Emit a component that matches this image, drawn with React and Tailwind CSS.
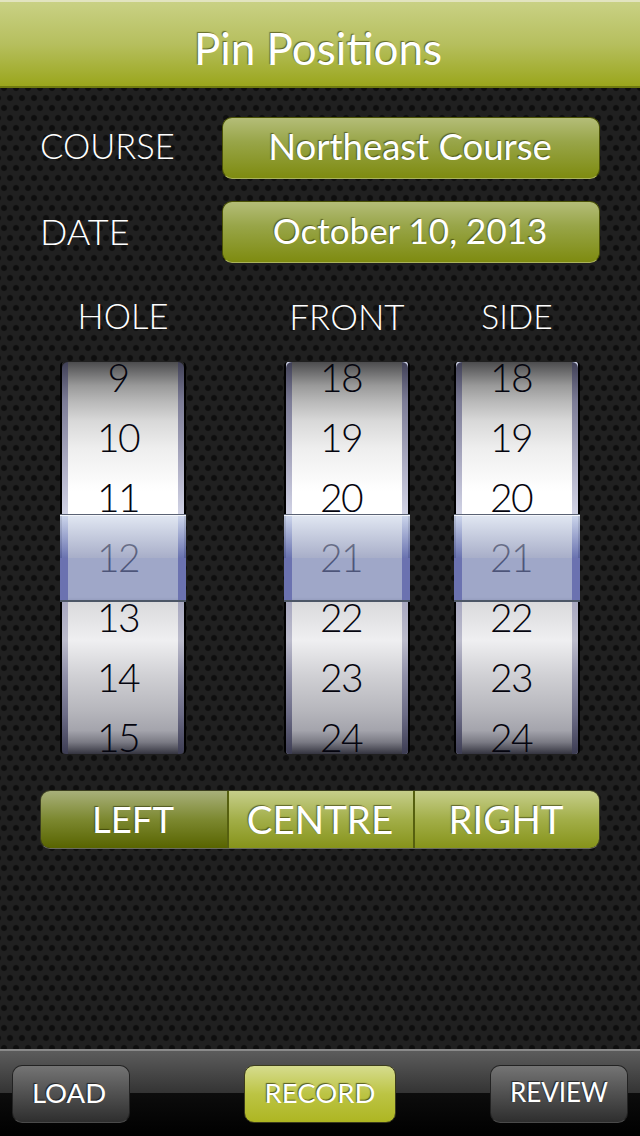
const shadow = "[text-shadow:-1px_-1px_1px_rgba(40,45,0,0.6)]";
const stripGradient = "bg-[linear-gradient(to_bottom,#3f3f55_0%,#7c7c96_10%,#b0b0c6_27%,#d4d6e8_40%,#d4d6e8_60%,#a8a8c0_61%,#bcbccc_71%,#9090a8_80%,#6c6c86_90%,#3c3c52_100%)]";

function Wheel({ label, labelSize, values, pad, corner }) {
  return (
    <div className="flex w-[126px] flex-col items-center">
      <div className={`mb-[28px] h-[36px] leading-[36px] font-light text-white ${labelSize}`}>{label}</div>
      <div className="relative h-[392px] w-[126px]">
        <div className="flex h-full overflow-hidden rounded-[4px] border-x-2 border-black bg-[linear-gradient(to_bottom,#4c4c4e_0%,#999999_6%,#b8b8b8_10%,#d8d8d8_15%,#eeeeee_22%,#ffffff_33%,#ffffff_60%,#d9d9db_61%,#efeff1_71%,#d0d0d4_80%,#b6b6bc_89%,#a4a4ac_94%,#7a7a84_97%,#34343f_100%)]">
          <div className={`w-[6px] shrink-0 ${corner}`}>
            <div className={`h-full rounded-tl-[6px] rounded-bl-[4px] ${stripGradient}`} />
          </div>
          <div className={`flex flex-1 flex-col items-center justify-center pb-[2px] ${pad}`}>
            {values.map((v) => (
              <div key={v} className="h-[60px] shrink-0 text-[39px] leading-[60px] font-light tracking-[-1.5px] text-[#05050f]">{v}</div>
            ))}
          </div>
          <div className={`w-[6px] shrink-0 ${corner}`}>
            <div className={`h-full rounded-tr-[6px] rounded-br-[4px] ${stripGradient}`} />
          </div>
        </div>
        <div className="absolute inset-x-0 top-[152px] flex h-[88px] flex-col">
          <div className="h-[1px] bg-[#5a6274]" />
          <div className="h-[1px] bg-[#f4f6fb]" />
          <div className="flex h-[42px] justify-between bg-[linear-gradient(to_bottom,rgba(209,218,235,0.675),rgba(126,135,174,0.675))]">
            <div className="w-[8px] bg-[linear-gradient(to_bottom,rgba(200,210,235,0.7),rgba(90,100,170,0.75))]" />
            <div className="w-[8px] bg-[linear-gradient(to_bottom,rgba(200,210,235,0.7),rgba(90,100,170,0.75))]" />
          </div>
          <div className="flex h-[42px] justify-between bg-[rgba(113,124,173,0.675)]">
            <div className="w-[8px] bg-[#6b72b0]" />
            <div className="w-[8px] bg-[#6b72b0]" />
          </div>
          <div className="h-[2px] bg-[#4c5666]" />
        </div>
      </div>
    </div>
  );
}

function Field({ label, labelSize, value, mb, size }) {
  return (
    <div className={`flex h-[62px] items-center ${mb}`}>
      <div className={`w-[182px] pb-[3px] leading-none font-light text-white ${labelSize}`}>{label}</div>
      <div className={`flex h-[62px] w-[378px] items-center justify-center rounded-[10px] border border-[#4a5206] border-b-[#aab35a] bg-[linear-gradient(to_bottom,#b4bd78,#98a548_40%,#7e8b10)] pb-[3px] pr-[2px] text-white ${size} ${shadow}`}>
        {value}
      </div>
    </div>
  );
}

const segBase = `flex h-full items-center justify-center text-white ${shadow}`;
const greyBtn = "flex h-[58px] items-center justify-center rounded-[10px] border border-[#222222] border-b-[#4a4a4a] bg-[linear-gradient(to_bottom,#747474,#505050_50%,#2e2e2e)] pb-[2px] text-white [text-shadow:-1px_-1px_1px_rgba(0,0,0,0.6)]";

export default function App() {
  return (
    <div className="flex h-[1136px] w-[640px] flex-col overflow-hidden bg-[#202020] font-['Lato','Liberation_Sans',sans-serif]">
      <header className={`flex h-[88px] shrink-0 items-center justify-center border-t-2 border-b-2 border-t-[#e2e4c0] border-b-[#6f7a10] bg-[linear-gradient(to_bottom,#c9d184,#b6bf5e_50%,#9aa61c)] pt-[8px] pr-[4px] text-[44px] text-white ${shadow}`}>
        Pin Positions
      </header>

      <main className="flex flex-1 flex-col bg-[#202020] bg-[radial-gradient(circle,#0e0e0e_2.4px,transparent_3.6px),radial-gradient(circle,#0e0e0e_2.4px,transparent_3.6px)] bg-[length:12px_20px] bg-[position:4px_0,10px_10px] px-[40px] pt-[29px]">
        <Field label="COURSE" labelSize="text-[34.5px]" value="Northeast Course" mb="mb-[22px]" size="text-[36.5px]" />
        <Field label="DATE" labelSize="text-[36px]" value="October 10, 2013" mb="mb-[35px]" size="text-[35px]" />

        <div className="ml-[20px] flex gap-[98px]">
          <Wheel label="HOLE" labelSize="text-[34.5px]" values={[9, 10, 11, 12, 13, 14, 15]} pad="pr-[10px]" corner="bg-[#222222]" />
          <div className="flex gap-[44px]">
            <Wheel label="FRONT" labelSize="text-[35px]" values={[18, 19, 20, 21, 22, 23, 24]} pad="pr-[12px]" corner="bg-[linear-gradient(to_bottom,#c8cce2,#c8cce2_50%,#5a5a70)]" />
            <Wheel label="SIDE" labelSize="text-[33.5px]" values={[18, 19, 20, 21, 22, 23, 24]} pad="pr-[12px]" corner="bg-[linear-gradient(to_bottom,#c8cce2,#c8cce2_50%,#5a5a70)]" />
          </div>
        </div>

        <div className="mt-[36px] flex h-[59px] w-[560px] overflow-hidden rounded-[10px] border border-[#3c3f20] border-b-[#6a6a60]">
          <div className={`${segBase} w-[186px] bg-[linear-gradient(to_bottom,#a8b07a,#7c8830_50%,#586400)] pr-[2px] text-[36.5px]`}>LEFT</div>
          <div className={`${segBase} w-[186px] border-l-2 border-[#56600f] bg-[linear-gradient(to_bottom,#c6ce8a,#a2ae48_50%,#86931a)] pr-[2px] text-[38.5px]`}>CENTRE</div>
          <div className={`${segBase} flex-1 border-l-2 border-[#56600f] bg-[linear-gradient(to_bottom,#c6ce8a,#a2ae48_50%,#86931a)] pr-[2px] text-[38.5px]`}>RIGHT</div>
        </div>
      </main>

      <footer className="grid h-[87px] shrink-0 grid-cols-3 items-center border-t-2 border-[#8a8a8a] bg-[linear-gradient(to_bottom,#5c5c5c,#333333_50%,#0c0c0c_50%,#000000)] px-[12px]">
        <div className={`${greyBtn} w-[118px] justify-self-start pr-[4px] text-[27.5px]`}>LOAD</div>
        <div className="flex h-[58px] w-[152px] items-center justify-center justify-self-center rounded-[10px] border border-[#3c3c1c] bg-[linear-gradient(to_bottom,#d6dc8e,#bcc444_50%,#aeb622)] pb-[2px] text-[27.5px] text-white [text-shadow:-1px_-1px_1px_rgba(40,45,0,0.7)]">RECORD</div>
        <div className={`${greyBtn} w-[138px] justify-self-end text-[26px]`}>REVIEW</div>
      </footer>
    </div>
  );
}
